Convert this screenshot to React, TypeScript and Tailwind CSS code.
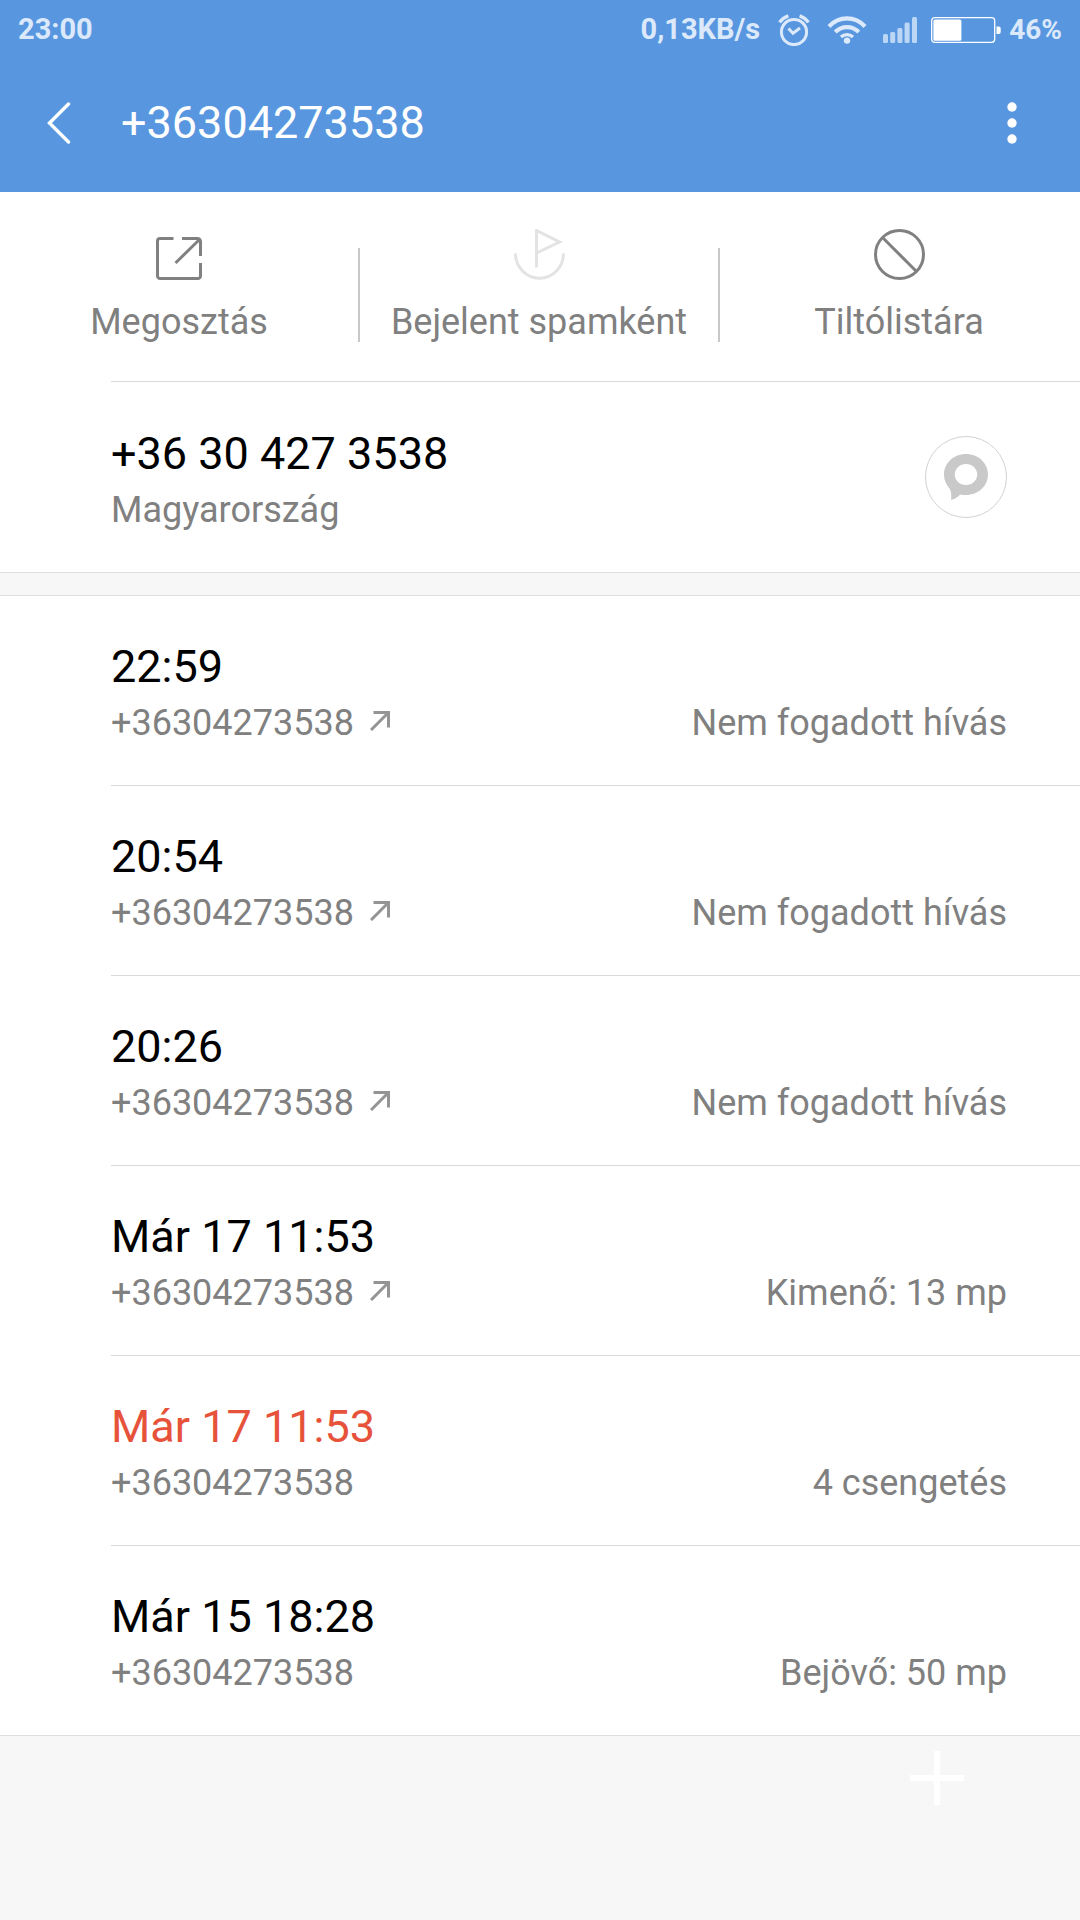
type CallEntry = {
  time: string;
  detail: string;
  outgoing: boolean;
  missed?: boolean;
};

const PHONE = "+36304273538";

const CALLS: CallEntry[] = [
  { time: "22:59", detail: "Nem fogadott hívás", outgoing: true },
  { time: "20:54", detail: "Nem fogadott hívás", outgoing: true },
  { time: "20:26", detail: "Nem fogadott hívás", outgoing: true },
  { time: "Már 17 11:53", detail: "Kimenő: 13 mp", outgoing: true },
  { time: "Már 17 11:53", detail: "4 csengetés", outgoing: false, missed: true },
  { time: "Már 15 18:28", detail: "Bejövő: 50 mp", outgoing: false },
];

function AlarmIcon() {
  return (
    <svg className="h-8 w-8" viewBox="0 0 32 32" fill="none" stroke="currentColor" aria-hidden="true">
      <circle cx="16" cy="18" r="12.6" strokeWidth="3" />
      <path d="M10.5 14.5 15 19.2l7-5.2" strokeWidth="3" />
      <path d="M1.6 8.4A17 17 0 0 1 10.4 1.8M30.4 8.4A17 17 0 0 0 21.6 1.8" strokeWidth="3.4" />
    </svg>
  );
}

function WifiIcon() {
  return (
    <svg className="h-7 w-10" viewBox="0 0 40 28" fill="none" stroke="currentColor" strokeWidth="4.2" aria-hidden="true">
      <path d="M2 10.5C12-.3 28-.3 38 10.5" />
      <path d="M8.2 16c6.6-6.6 17-6.6 23.6 0" />
      <path d="M14 21c3.4-3.2 8.6-3.2 12 0" strokeWidth="3.4" />
      <circle cx="20" cy="24.6" r="3.2" fill="currentColor" stroke="none" />
    </svg>
  );
}

function SignalIcon() {
  return (
    <svg className="h-7 w-[34px] text-[#bcd6f5]" viewBox="0 0 34 28" fill="currentColor" aria-hidden="true">
      <rect x="0" y="18" width="5" height="9" rx="1.5" />
      <rect x="7.2" y="16" width="5" height="11" rx="1.5" />
      <rect x="14.4" y="12" width="5" height="15" rx="1.5" />
      <rect x="21.6" y="6.5" width="5" height="20.5" rx="1.5" />
      <rect x="29" y="1" width="5" height="26" rx="1.5" />
    </svg>
  );
}

function BatteryIcon() {
  return (
    <svg className="h-7 w-[70px]" viewBox="0 0 70 28" aria-hidden="true">
      <rect x="0.7" y="1.7" width="63" height="24.6" rx="3" fill="none" stroke="#fff" strokeWidth="1.3" />
      <rect x="2.4" y="3.4" width="28" height="21.4" rx="1.5" fill="#fff" />
      <path d="M65.5 10.5h2.2a2 2 0 0 1 2 2v3.6a2 2 0 0 1-2 2h-2.2z" fill="#fff" />
    </svg>
  );
}

function ShareIcon() {
  return (
    <svg className="size-[51px]" viewBox="1 0 51 51" fill="none" stroke="currentColor" strokeWidth="3" aria-hidden="true">
      <path d="M20.5 9.5H7A2.5 2.5 0 0 0 4.500 12v35A2.500 2.500 0 0 0 7 49.500h38A2.500 2.500 0 0 0 47.500 47V34" />
      <path d="M29 9.500h15.500a3 3 0 0 1 3 3V27M46.500 10.500l-24 23.500" />
    </svg>
  );
}

function SpamIcon() {
  return (
    <svg className="size-[51px] text-[#e3e3e3]" viewBox="0 0 51 51" fill="none" stroke="currentColor" strokeWidth="3" aria-hidden="true">
      <path d="M1.500 24.500a24 24.700 0 0 0 48 0" />
      <path d="M22.500 38.500V1.500L45.500 13l-23 11" />
    </svg>
  );
}

function BlockIcon() {
  return (
    <svg className="size-[51px]" viewBox="0 0 51 51" fill="none" stroke="currentColor" strokeWidth="3" aria-hidden="true">
      <circle cx="25.500" cy="25.500" r="24" />
      <path d="m8.500 8.500 34 34" />
    </svg>
  );
}

function MessageIcon() {
  return (
    <svg className="h-[46px] w-11" viewBox="0 0 44 46" fill="#c9c9c9" aria-hidden="true">
      <path
        fillRule="evenodd"
        d="M22 0c12.300 0 22 9 22 20.500S34.300 41 22 41c-2.200 0-4.200-.2-5.800-.6-2.600 3-5.600 4.800-9.200 5.400.7-4.300.3-8.300-1.600-11.600C2 30.500 0 26 0 20.500 0 9 9.700 0 22 0Zm0 10c-6.300 0-11.300 4.700-11.300 10.500S15.700 31 22 31s11.300-4.700 11.300-10.500S28.300 10 22 10Z"
      />
    </svg>
  );
}

function ActionButton({ label, icon }: { label: string; icon: React.ReactNode }) {
  return (
    <button type="button" className="flex flex-1 flex-col items-center gap-[18px] pt-[37px] pb-[35px]">
      {icon}
      <span className="text-[36px] leading-[48px] whitespace-nowrap">{label}</span>
    </button>
  );
}

function CallRow({ call }: { call: CallEntry }) {
  return (
    <li className="ml-[111px] flex items-end justify-between border-b border-[#d9d9d9] pt-[43px] pr-[73px] pb-[34px] last:border-b-0">
      <div>
        <p className={`text-[45px] leading-[56px] ${call.missed ? "text-[#e6523a]" : "text-black"}`}>
          {call.time}
        </p>
        <p className="flex items-center gap-4 text-[36px] leading-[56px]">
          {PHONE}
          {call.outgoing && (
            <svg className="mb-1 size-5 text-[#949494]" viewBox="0 0 20 20" fill="none" stroke="currentColor" strokeWidth="3" aria-hidden="true">
              <path d="M3.500 1.500h15v15M18 2 1 19" />
            </svg>
          )}
        </p>
      </div>
      <p className="text-[36px] leading-[56px]">{call.detail}</p>
    </li>
  );
}

export default function App() {
  return (
    <div className="flex min-h-screen flex-col bg-[#f7f7f7] font-[Roboto,sans-serif] text-[#808080]">
      <header className="bg-[#5897e0] pb-1.5 text-white">
        <div className="flex h-15 items-center justify-between px-[18px] text-[29px] font-bold text-[#dce9fa]">
          <span>23:00</span>
          <div className="flex items-center">
            <span className="mr-[18px]">0,13KB/s</span>
            <AlarmIcon />
            <span className="ml-[17px] flex items-center gap-4">
              <WifiIcon />
              <SignalIcon />
            </span>
            <span className="ml-3.5 flex items-center gap-2 text-[28px]">
              <BatteryIcon />
              46%
            </span>
          </div>
        </div>
        <div className="flex h-[126px] items-center pr-[59px] pl-[46px]">
          <button type="button" aria-label="Vissza" className="mr-[50px]">
            <svg className="h-[42px] w-[25px]" viewBox="0 0 25 42" fill="none" stroke="currentColor" strokeWidth="3.400" strokeLinecap="round" aria-hidden="true">
              <path d="M22.500 2 3.500 21l19 19" />
            </svg>
          </button>
          <h1 className="flex-1 text-[45px] leading-[56px]">{PHONE}</h1>
          <button type="button" aria-label="Továbbiak">
            <svg className="h-[42px] w-[18px]" viewBox="0 0 18 42" fill="currentColor" aria-hidden="true">
              <circle cx="9" cy="5" r="4.700" />
              <circle cx="9" cy="21" r="4.700" />
              <circle cx="9" cy="37" r="4.700" />
            </svg>
          </button>
        </div>
      </header>

      <section className="flex bg-white pr-0.5">
        <ActionButton label="Megosztás" icon={<ShareIcon />} />
        <div className="mt-14 h-[94px] w-0.5 bg-[#c8c8c8]" />
        <ActionButton label="Bejelent spamként" icon={<SpamIcon />} />
        <div className="mt-14 h-[94px] w-0.5 bg-[#c8c8c8]" />
        <ActionButton label="Tiltólistára" icon={<BlockIcon />} />
      </section>

      <section className="bg-white pl-[111px]">
        <div className="flex items-center justify-between border-t border-[#d9d9d9] pr-[73px]">
          <div className="pt-11 pb-[34px]">
            <p className="text-[45px] leading-[56px] text-black">+36 30 427 3538</p>
            <p className="text-[36px] leading-[56px]">Magyarország</p>
          </div>
          <button
            type="button"
            aria-label="Üzenet küldése"
            className="flex size-[82px] items-center justify-center rounded-full border border-[#d2d2d2]"
          >
            <MessageIcon />
          </button>
        </div>
      </section>

      <div className="h-6 border-y border-[#dedede]" />

      <ul className="border-b border-[#dedede] bg-white">
        {CALLS.map((call, i) => (
          <CallRow key={i} call={call} />
        ))}
      </ul>

      <footer className="flex justify-end pt-[15px] pr-[116px]">
        <button type="button" aria-label="Hozzáadás">
          <svg className="size-[54px]" viewBox="0 0 54 54" stroke="#fff" strokeWidth="6" aria-hidden="true">
            <path d="M27 0v54M0 27h54" />
          </svg>
        </button>
      </footer>
    </div>
  );
}
